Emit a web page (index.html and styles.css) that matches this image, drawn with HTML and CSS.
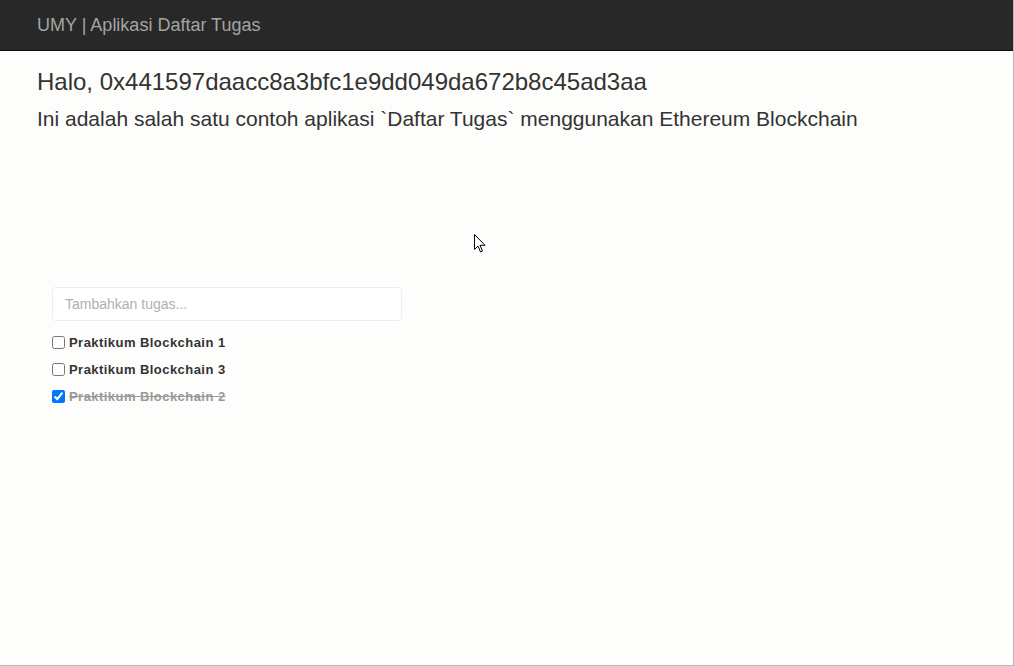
FILE: index.html
```html
<!DOCTYPE html>
<html lang="id">
<head>
<meta charset="utf-8">
<title>UMY | Aplikasi Daftar Tugas</title>
<link rel="stylesheet" href="styles.css">
</head>
<body>
<div class="frame">
  <nav class="navbar">
    <span class="brand">UMY | Aplikasi Daftar Tugas</span>
  </nav>
  <main class="content">
    <h3 class="greet">Halo, 0x441597daacc8a3bfc1e9dd049da672b8c45ad3aa</h3>
    <p class="lead">Ini adalah salah satu contoh aplikasi `Daftar Tugas` menggunakan Ethereum Blockchain</p>
    <section class="tasks">
      <input class="task-input" type="text" placeholder="Tambahkan tugas...">
      <ul class="task-list">
        <li><label><input type="checkbox"><span>Praktikum Blockchain 1</span></label></li>
        <li><label><input type="checkbox"><span>Praktikum Blockchain 3</span></label></li>
        <li class="done"><label><input type="checkbox" checked><span>Praktikum Blockchain 2</span></label></li>
      </ul>
    </section>
  </main>
  <svg class="cursor" width="12" height="20" viewBox="0 0 12 20" aria-hidden="true">
    <path d="M0.5 0.5 L0.5 15.5 L4 12 L6.5 18 L8.5 17 L6 11.3 L11 11.3 Z" fill="#fff" stroke="#000" stroke-width="1" stroke-linejoin="miter"/>
  </svg>
</div>
</body>
</html>
```
FILE: styles.css
```css
* { box-sizing: border-box; }
html, body {
  margin: 0;
  padding: 0;
  height: 100%;
  background: #fdfdfb;
}
body {
  font-family: "Liberation Sans", Arial, sans-serif;
  color: #333;
}
.frame {
  position: relative;
  width: 1014px;
  height: 666px;
  border-right: 1px solid #b8b8b8;
  border-bottom: 1px solid #b8b8b8;
  overflow: hidden;
}
.navbar {
  height: 51px;
  background: #282828;
  border-bottom: 1px solid #080808;
  display: flex;
  align-items: center;
  padding-left: 37px;
  padding-bottom: 0;
}
.brand {
  color: #a4a4a4;
  font-size: 18px;
}
.content {
  padding: 0 37px;
}
.greet {
  margin: 17px 0 0;
  font-size: 24px;
  font-weight: normal;
  line-height: 27px;
  color: #333;
}
.lead {
  margin: 12px 0 0;
  font-size: 21px;
  line-height: 24px;
  color: #333;
}
.tasks {
  margin-top: 156px;
  padding-left: 15px;
}
.task-input {
  display: block;
  width: 350px;
  height: 34px;
  border: 1px solid #ececec;
  border-radius: 4px;
  background: #fff;
  padding: 0 12px;
  font-family: "Liberation Sans", Arial, sans-serif;
  font-size: 14px;
  color: #555;
}
.task-input::placeholder { color: #b0b0b0; }
.task-list {
  list-style: none;
  margin: 14px 0 0;
  padding: 0;
}
.task-list li {
  height: 27px;
}
.task-list label {
  display: flex;
  align-items: center;
  font-size: 13px;
  letter-spacing: 0.45px;
  font-weight: bold;
  color: #333;
}
.task-list input {
  margin: 0 4px 0 0;
  width: 13px;
  height: 13px;
}
.task-list .done span {
  color: #999;
  text-decoration: line-through;
}
.cursor {
  position: absolute;
  left: 474px;
  top: 234px;
}
```
